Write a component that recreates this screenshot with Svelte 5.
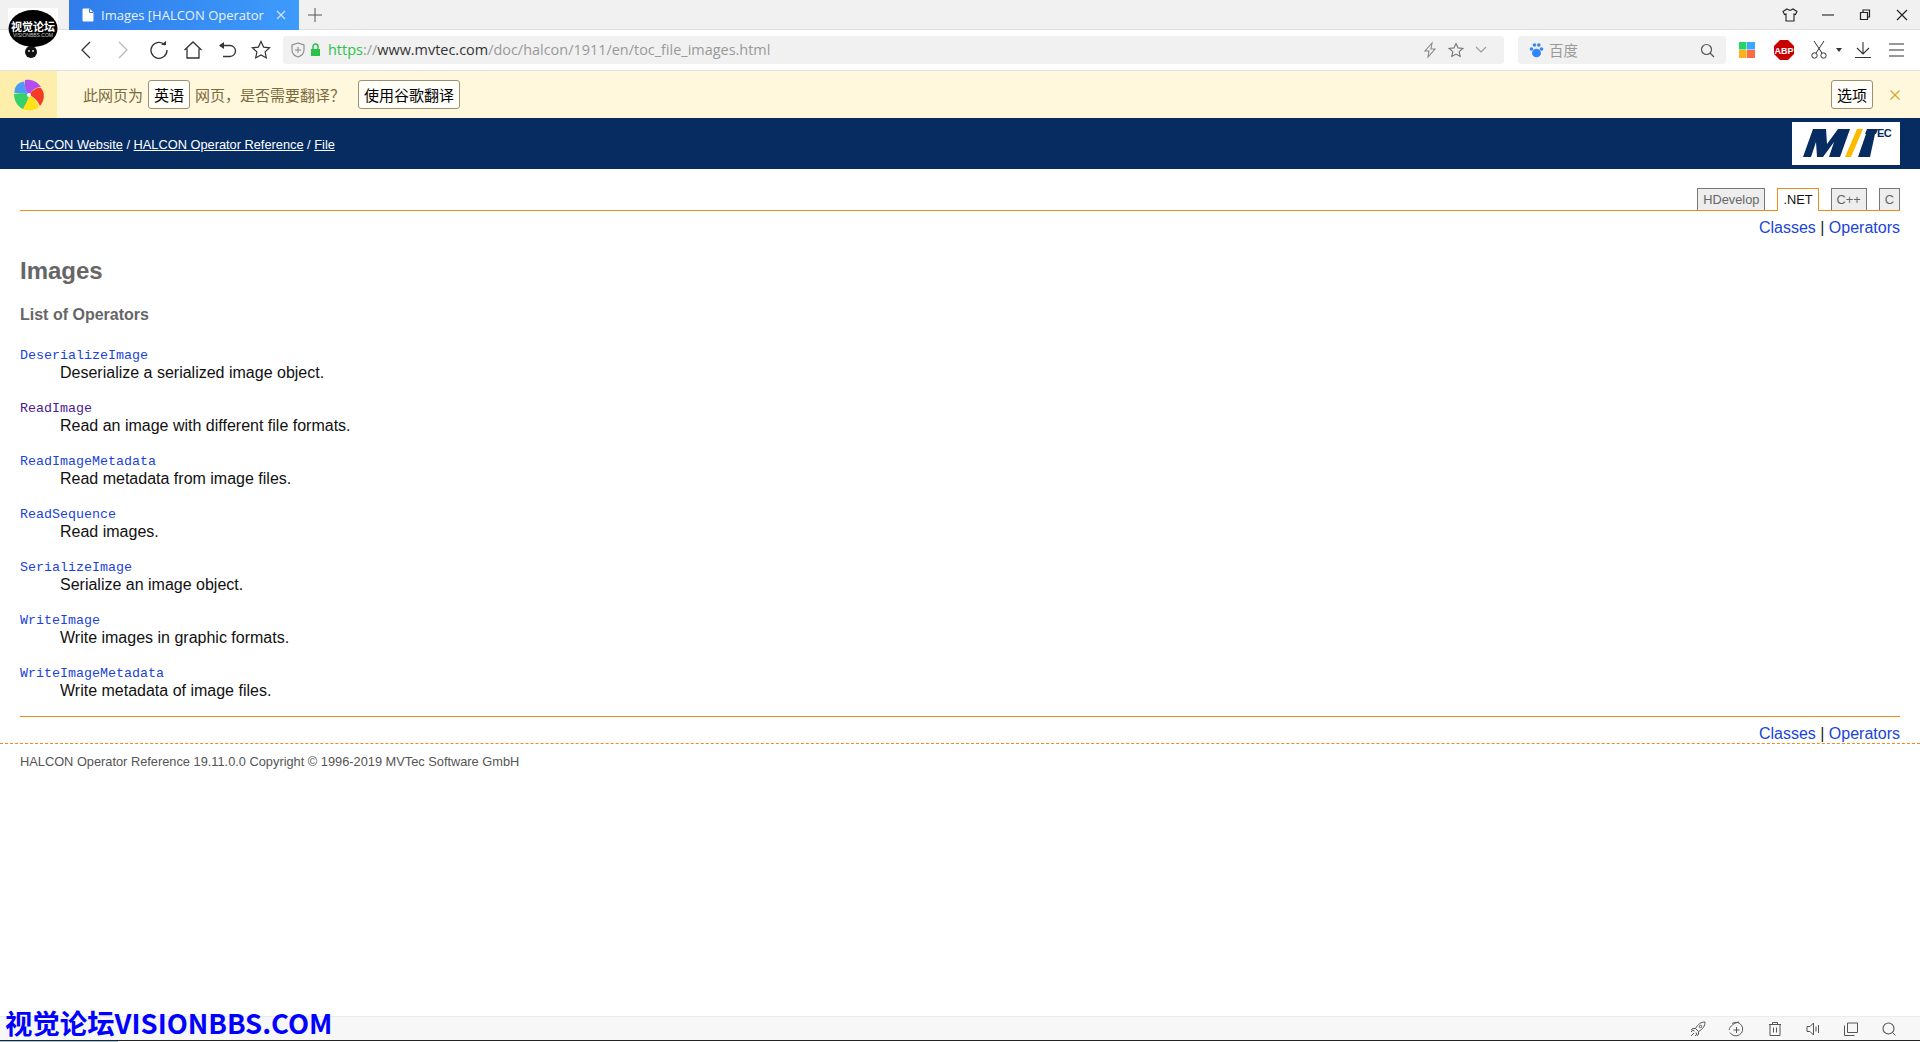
<script>
  const operators = [
    ["DeserializeImage", "Deserialize a serialized image object.", false],
    ["ReadImage", "Read an image with different file formats.", true],
    ["ReadImageMetadata", "Read metadata from image files.", false],
    ["ReadSequence", "Read images.", false],
    ["SerializeImage", "Serialize an image object.", false],
    ["WriteImage", "Write images in graphic formats.", false],
    ["WriteImageMetadata", "Write metadata of image files.", false]
  ];
</script>

<div class="page">
  <div class="tabstrip">
    <div class="avatar-gap"></div>
    <div class="tab">
      <svg width="12" height="14" viewBox="0 0 12 14"><path d="M1 1h6.500l3.500 3.500v8.500h-10z" fill="#fff" stroke="#fff"/><path d="M7.500 1v3.500h3.500" fill="none" stroke="#2f7fe8"/></svg>
      <span class="tab-title">Images [HALCON Operator</span>
      <svg class="tab-x" width="10" height="10" viewBox="0 0 10 10"><path d="M1 1l8 8M9 1l-8 8" stroke="#cfe3ff" stroke-width="1.200"/></svg>
    </div>
    <svg class="plus" width="14" height="14" viewBox="0 0 14 14"><path d="M7 0v14M0 7h14" stroke="#555" stroke-width="1"/></svg>
    <div class="spacer"></div>
    <div class="winbtns">
      <svg width="16" height="16" viewBox="0 0 16 16"><path d="M5 2l3 1.500 3-1.500 4 2.500-1.500 3-1.500-.5v7h-8v-7l-1.500.5-1.500-3z" fill="none" stroke="#222" stroke-width="1.100"/></svg>
      <svg width="14" height="14" viewBox="0 0 14 14"><path d="M1 7h12" stroke="#222" stroke-width="1.100"/></svg>
      <svg width="14" height="14" viewBox="0 0 14 14"><path d="M2.500 4.500h7v7h-7zM5 4.500v-2.500h6.500v7h-2" fill="none" stroke="#222" stroke-width="1.200"/></svg>
      <svg width="14" height="14" viewBox="0 0 14 14"><path d="M2 2l10 10M12 2l-10 10" stroke="#222" stroke-width="1.200"/></svg>
    </div>
  </div>

  <div class="toolbar">
    <div class="nav">
      <svg width="16" height="20" viewBox="0 0 16 20"><path d="M12 2l-8 8 8 8" fill="none" stroke="#333" stroke-width="1.300"/></svg>
      <svg width="16" height="20" viewBox="0 0 16 20"><path d="M4 2l8 8-8 8" fill="none" stroke="#bbb" stroke-width="1.300"/></svg>
      <svg width="20" height="20" viewBox="0 0 20 20"><path d="M16 5a8 8 0 1 0 2 5" fill="none" stroke="#333" stroke-width="1.300"/><path d="M12 5h5v-4z" fill="#333"/></svg>
      <svg width="20" height="20" viewBox="0 0 20 20"><path d="M1.500 10l8.500-8 8.500 8M4 8.500v9.500h12v-9.500" fill="none" stroke="#333" stroke-width="1.300"/></svg>
      <svg width="20" height="20" viewBox="0 0 20 20"><path d="M3 5.500h10a5.500 5.500 0 0 1 0 11h-7" fill="none" stroke="#333" stroke-width="1.300"/><path d="M7 2v7l-5-3.500z" fill="#333"/></svg>
      <svg width="20" height="20" viewBox="0 0 20 20"><path d="M10 1.500l2.600 5.600 6 .7-4.500 4.100 1.200 6-5.300-3-5.300 3 1.200-6-4.500-4.100 6-.7z" fill="none" stroke="#333" stroke-width="1.200"/></svg>
    </div>
    <div class="address">
      <svg width="14" height="16" viewBox="0 0 14 16"><path d="M7 1l6 2v5c0 3.500-3 6-6 7-3-1-6-3.500-6-7v-5z" fill="none" stroke="#888" stroke-width="1.100"/><path d="M7 5v6M4 8h6" stroke="#888"/></svg>
      <svg width="12" height="14" viewBox="0 0 12 14"><path d="M3 6v-2.500a2.500 2.500 0 0 1 5 0v2.500" fill="none" stroke="#2bc24a" stroke-width="1.500"/><rect x="1" y="6" width="9" height="7" fill="#2bc24a"/></svg>
      <span class="url"><span class="scheme">https</span><span class="path">://</span><span class="host">www.mvtec.com</span><span class="path">/doc/halcon/1911/en/toc_file_images.html</span></span>
      <div class="spacer"></div>
      <svg width="14" height="16" viewBox="0 0 14 16"><path d="M9 1l-7 8h4l-1 6 7-8h-4z" fill="none" stroke="#888" stroke-width="1.100"/></svg>
      <svg width="16" height="16" viewBox="0 0 16 16"><path d="M8 1.500l2 4.400 4.800.6-3.600 3.200 1 4.800-4.200-2.400-4.200 2.400 1-4.800-3.600-3.200 4.800-.6z" fill="none" stroke="#777" stroke-width="1.100"/></svg>
      <svg width="12" height="8" viewBox="0 0 12 8"><path d="M1 1l5 5 5-5" fill="none" stroke="#999" stroke-width="1.100"/></svg>
    </div>
    <div class="search">
      <svg width="15" height="16" viewBox="0 0 15 16"><ellipse cx="7.500" cy="11" rx="4.500" ry="4.300" fill="#3385ff"/><circle cx="2.500" cy="7" r="1.800" fill="#3385ff"/><circle cx="12.500" cy="7" r="1.800" fill="#3385ff"/><circle cx="5.500" cy="3" r="1.800" fill="#3385ff"/><circle cx="9.800" cy="3" r="1.800" fill="#3385ff"/></svg>
      <span class="search-text">百度</span>
      <div class="spacer"></div>
      <svg width="15" height="15" viewBox="0 0 15 15"><circle cx="6.500" cy="6.500" r="5" fill="none" stroke="#555" stroke-width="1.200"/><path d="M10 10l4 4" stroke="#555" stroke-width="1.300"/></svg>
    </div>
    <div class="tools">
      <svg class="t1" width="16" height="16" viewBox="0 0 16 16"><rect width="7.500" height="7.500" fill="#25d366"/><rect x="8" width="8" height="7.500" fill="#3ba8ff"/><rect y="8" width="7.500" height="8" fill="#ffb01f"/><rect x="8" y="8" width="8" height="8" fill="#ff6a45"/></svg>
      <svg class="t2" width="20" height="20" viewBox="0 0 20 20"><path d="M6 0h8l6 6v8l-6 6h-8l-6-6v-8z" fill="#c80000"/><text x="10" y="13.500" class="abp">ABP</text></svg>
      <svg class="t3" width="16" height="18" viewBox="0 0 16 18"><path d="M3 0l8 12M13 0l-8 12" stroke="#333" fill="none"/><circle cx="3.500" cy="14.500" r="2.700" fill="none" stroke="#333"/><circle cx="12.500" cy="14.500" r="2.700" fill="none" stroke="#333"/></svg>
      <svg class="t4" width="6" height="4" viewBox="0 0 6 4"><path d="M0 0h6l-3 4z" fill="#333"/></svg>
      <svg class="t5" width="16" height="16" viewBox="0 0 16 16"><path d="M8 0v11M2 6l6 6 6-6M0 15.500h16" fill="none" stroke="#333" stroke-width="1.100"/></svg>
      <svg class="t6" width="15" height="14" viewBox="0 0 15 14"><path d="M0 1h15M0 7h15M0 13h15" stroke="#333" stroke-width="1.100"/></svg>
    </div>
  </div>

  <div class="infobar">
    <div class="wheel">
      <svg width="32" height="32" viewBox="0 0 32 32">
        <path d="M16 16C12 14 5 14 1.500 14C1 8 5 3 11 2.500C12 7 13 12 16 16Z" fill="#4c9bf5"/>
        <path d="M16 16C13 12 11 7 12 1C18 0 24 2 28 8C24 8 20 10 16 16Z" fill="#b44df0"/>
        <path d="M16 16C19 12 24 8 28 9C32 14 32 21 27 27C25 22 21 18 16 16Z" fill="#f53a25"/>
        <path d="M16 16C20 18 24 23 26 28C22 32 15 32 9 30C11 26 14 21 16 16Z" fill="#fde21a"/>
        <path d="M16 16C15 21 12 26 10 30C5 28 1 22 1 15C6 14 12 14 16 16Z" fill="#35d06a"/>
        <circle cx="16" cy="16" r="2" fill="#fff"/>
      </svg>
    </div>
    <span class="msg first">此网页为</span>
    <button class="tr-btn">英语</button>
    <span class="msg">网页，是否需要翻译？</span>
    <button class="tr-btn use">使用谷歌翻译</button>
    <div class="spacer"></div>
    <button class="tr-btn">选项</button>
    <svg class="info-x" width="10" height="10" viewBox="0 0 10 10"><path d="M.5.5l9 9M9.500.5l-9 9" stroke="#d9a32c" stroke-width="1.200"/></svg>
  </div>

  <main class="doc">
    <header class="banner">
      <nav class="crumbs"><a href="#a">HALCON Website</a> / <a href="#b">HALCON Operator Reference</a> / <a href="#c">File</a></nav>
      <div class="logo">
        <svg width="108" height="43" viewBox="0 0 108 43">
          <path d="M11 35L21 7h13l1 15L46 7h12L48 35H37l5-15-11 15h-6l-1-15-5 15z" fill="#062c62"/>
          <path d="M53 35L65 7h6L59 35z" fill="#fdbb00"/>
          <path d="M66 35L74 12h-1l2-5h11l-2 5h-1L78 35z" fill="#062c62"/>
          <text x="85" y="15" class="ec">EC</text>
        </svg>
      </div>
    </header>

    <div class="content">
      <div class="langs">
        <span class="lang">HDevelop</span>
        <span class="lang active">.NET</span>
        <span class="lang">C++</span>
        <span class="lang">C</span>
      </div>
      <div class="toc"><a href="#d">Classes</a> | <a href="#e">Operators</a></div>
      <h1>Images</h1>
      <h2>List of Operators</h2>
      <dl>
        {#each operators as [name, text, seen]}
          <dt><a href="#f" class:seen>{name}</a></dt>
          <dd>{text}</dd>
        {/each}
      </dl>
      <hr />
      <div class="toc bottom"><a href="#g">Classes</a> | <a href="#h">Operators</a></div>
    </div>

    <footer class="foot">HALCON Operator Reference 19.11.0.0 Copyright © 1996-2019 MVTec Software GmbH</footer>
  </main>

  <div class="statusbar">
    <svg class="rocket" width="16" height="16" viewBox="0 0 16 16"><path d="M15 1c-4 0-7 2-9.500 6.500l3 3C13 8 15 5 15 1zM5.500 7.500h-3l-1 1.500 3 1M8.500 10.500v3l-1.500 1-1-3M4 12l-3 3M2 10l-1 1M6 14l-1 1" fill="none" stroke="#555"/><circle cx="10.500" cy="5.500" r="1.200" fill="none" stroke="#555"/></svg>
    <svg width="16" height="16" viewBox="0 0 16 16"><path d="M4 2.500a6.800 6.800 0 1 1-2 9" fill="none" stroke="#555"/><path d="M1 9c1-4 5-7 10-8" fill="none" stroke="#555"/><path d="M8.500 6v6M5.500 9h6" stroke="#555"/></svg>
    <svg width="14" height="16" viewBox="0 0 14 16"><path d="M1 3.500h12M4.500 3.500v-2h5v2M2 3.500h10v11h-10zM5.500 6.500v5M8.500 6.500v5" fill="none" stroke="#555"/></svg>
    <svg width="14" height="16" viewBox="0 0 14 16"><path d="M1 5.500h3l3.500-3.500v12l-3.500-3.500h-3zM10 5.500v5M12.500 4v8" fill="none" stroke="#555"/></svg>
    <svg width="14" height="14" viewBox="0 0 14 14"><path d="M3.500 1h10v9.500h-10zM.5 3.500v10h10" fill="none" stroke="#555"/></svg>
    <svg width="14" height="14" viewBox="0 0 14 14"><circle cx="6.500" cy="6.500" r="5.500" fill="none" stroke="#555" stroke-width="1.100"/><path d="M10.500 10.500l3 3" stroke="#555"/></svg>
  </div>
  <div class="taskbar"></div>

  <div class="avatar">
    <svg width="50" height="52" viewBox="0 0 50 52">
      <ellipse cx="25" cy="20.500" rx="24.500" ry="18.500" fill="#000"/>
      <path d="M20 36l2 6 7-5z" fill="#000"/>
      <circle cx="23" cy="44" r="6" fill="#111"/>
      <circle cx="21" cy="43" r="1" fill="#ddd"/>
      <circle cx="25" cy="43" r="1" fill="#ddd"/>
      <text x="25" y="23" class="av-cn">视觉论坛</text>
      <text x="25" y="29" class="av-en">VISIONBBS.COM</text>
    </svg>
  </div>
  <div class="watermark">视觉论坛VISIONBBS.COM</div>
</div>

<style>
  :global(body) {
    margin: 0;
    background: #fff;
  }
  .page {
    position: relative;
    width: 1920px;
    height: 1042px;
    display: flex;
    flex-direction: column;
    overflow: hidden;
    font-family: "Liberation Sans", Arial, sans-serif;
  }
  .spacer {
    flex: 1;
  }
  svg {
    display: block;
    flex: none;
  }

  /* browser chrome */
  .tabstrip {
    height: 29px;
    border-bottom: 1px solid #dfdfdf;
    background: #f1f1f1;
    display: flex;
    align-items: center;
    flex: none;
  }
  .avatar-gap {
    width: 69px;
  }
  .tab {
    width: 230px;
    height: 30px;
    margin-bottom: -1px;
    box-sizing: border-box;
    padding: 0 13px;
    background: linear-gradient(90deg, #2f7cea, #3d9bfb);
    display: flex;
    align-items: center;
    color: #e8f2ff;
    font: 13px "Open Sans", sans-serif;
  }
  .tab-title {
    margin-left: 7px;
    width: 166px;
    white-space: nowrap;
  }
  .tab-x {
    margin-left: 10px;
  }
  .plus {
    margin-left: 9px;
  }
  .winbtns {
    display: flex;
    align-items: center;
    gap: 23px;
    padding-right: 11px;
  }
  .toolbar {
    height: 40px;
    border-bottom: 1px solid #e2e2e2;
    background: #fff;
    display: flex;
    align-items: center;
    flex: none;
  }
  .nav {
    display: flex;
    align-items: center;
    gap: 14px;
    padding-left: 78px;
    width: 205px;
  }
  .nav svg:nth-child(2) {
    margin-left: 7px;
    margin-right: 4px;
  }
  .address {
    width: 1221px;
    height: 28px;
    box-sizing: border-box;
    padding: 0 17px 0 8px;
    background: #f1f1f1;
    border-radius: 3px;
    display: flex;
    align-items: center;
    gap: 5px;
  }
  .address svg:nth-of-type(n + 3) {
    margin-left: 6px;
  }
  .url {
    margin-left: 1px;
    padding-bottom: 2px;
    font: 14.450px "Open Sans", sans-serif;
    white-space: nowrap;
  }
  .scheme {
    color: #2bc24a;
  }
  .path {
    color: #999;
  }
  .host {
    color: #333;
  }
  .search {
    width: 208px;
    height: 28px;
    box-sizing: border-box;
    margin-left: 14px;
    padding: 0 11px;
    background: #f1f1f1;
    border-radius: 3px;
    display: flex;
    align-items: center;
  }
  .search-text {
    margin-left: 5px;
    padding-bottom: 2px;
    color: #999;
    font: 14.500px "Noto Sans CJK SC", sans-serif;
  }
  .tools {
    display: flex;
    align-items: center;
    padding-left: 13px;
  }
  .t2 {
    margin-left: 19px;
  }
  .t3 {
    margin-left: 17px;
  }
  .t4 {
    margin-left: 9px;
  }
  .t5 {
    margin-left: 13px;
  }
  .t6 {
    margin-left: 18px;
  }
  .abp {
    font: bold 9px "Liberation Sans", sans-serif;
    fill: #fff;
    text-anchor: middle;
  }

  /* translate bar */
  .infobar {
    height: 47px;
    background: #fff8dc;
    display: flex;
    align-items: center;
    flex: none;
    box-sizing: border-box;
    padding-right: 20px;
  }
  .wheel {
    width: 57px;
    height: 100%;
    background: #fdeeab;
    display: flex;
    align-items: center;
    justify-content: center;
  }
  .msg {
    font: 15px "Noto Sans CJK SC", sans-serif;
    color: #7b6a3d;
    margin: 0 5px;
  }
  .msg.first {
    margin-left: 26px;
  }
  .tr-btn {
    height: 29px;
    box-sizing: border-box;
    padding: 0 5px;
    background: #fffef8;
    border: 1px solid #9b9071;
    border-radius: 3px;
    color: #000;
    font: 15px "Noto Sans CJK SC", sans-serif;
  }
  .use {
    margin-left: 8px;
  }
  .info-x {
    margin-left: 17px;
  }

  /* document */
  .doc {
    flex: 1;
    min-height: 0;
    background: #fff;
  }
  .banner {
    height: 51px;
    background: #062c62;
    display: flex;
    align-items: center;
    justify-content: space-between;
    padding: 0 20px;
  }
  .crumbs {
    padding-top: 2px;
    color: #fff;
    font-size: 12.800px;
  }
  .crumbs a {
    color: #fff;
  }
  .logo {
    background: #fff;
    height: 43px;
  }
  .ec {
    font: bold 11px "Liberation Sans", sans-serif;
    letter-spacing: -0.5px;
    fill: #062c62;
  }
  .content {
    padding: 19px 20px 0;
  }
  .langs {
    display: flex;
    justify-content: flex-end;
    gap: 12px;
    height: 22px;
    border-bottom: 1px solid #f28a1c;
  }
  .lang {
    height: 22px;
    box-sizing: border-box;
    padding: 3px 5px 0;
    background: #eee;
    border: 1px solid #777;
    border-bottom: none;
    color: #666;
    font-size: 12.800px;
  }
  .active {
    height: 23px;
    background: #fff;
    border-color: #f28a1c;
    color: #111;
  }
  .toc {
    text-align: right;
    margin-top: 8px;
    font-size: 16px;
    line-height: 18px;
    color: #222;
  }
  .toc a,
  dt a {
    color: #1a44d8;
    text-decoration: none;
  }
  h1 {
    margin: 20px 0 0;
    font-size: 24px;
    line-height: 28px;
    color: #666;
  }
  h2 {
    margin: 20px 0 0;
    font-size: 16px;
    line-height: 20px;
    color: #666;
  }
  dl {
    margin: 22px 0 0;
  }
  dt {
    font: 13.330px/17px "Liberation Mono", monospace;
  }
  dt a.seen {
    color: #4b1a94;
  }
  dd {
    margin: 0 0 18px 40px;
    font-size: 16px;
    line-height: 18px;
    color: #111;
  }
  hr {
    margin: -2px 0 0;
    height: 1px;
    border: none;
    background: #f28a1c;
  }
  .toc.bottom {
    margin-top: 8px;
  }
  .foot {
    margin-top: 0;
    border-top: 1px dashed #f28a1c;
    padding: 9px 20px;
    font-size: 12.800px;
    line-height: 17px;
    color: #555;
  }

  /* bottom bars */
  .statusbar {
    height: 23px;
    border-top: 1px solid #ececec;
    background: #f7f7f7;
    display: flex;
    align-items: center;
    justify-content: flex-end;
    gap: 24px;
    padding-right: 24px;
    flex: none;
  }
  .rocket {
    margin-right: -2px;
  }
  .taskbar {
    height: 1px;
    border-top: 1px solid #222;
    background: linear-gradient(90deg, #9cc5e0 118px, #fff 118px);
    flex: none;
  }
  .avatar {
    position: absolute;
    left: 8px;
    top: 8px;
    background: #fff;
  }
  .av-cn {
    font: bold 11px "Noto Sans CJK SC", sans-serif;
    fill: #fff;
    text-anchor: middle;
  }
  .av-en {
    font: 5px "Liberation Sans", sans-serif;
    fill: #ccc;
    text-anchor: middle;
  }
  .watermark {
    position: absolute;
    left: 5px;
    top: 1003px;
    color: #0000ff;
    font: bold 27.400px/38px "Noto Sans CJK SC", sans-serif;
    white-space: nowrap;
  }
</style>
